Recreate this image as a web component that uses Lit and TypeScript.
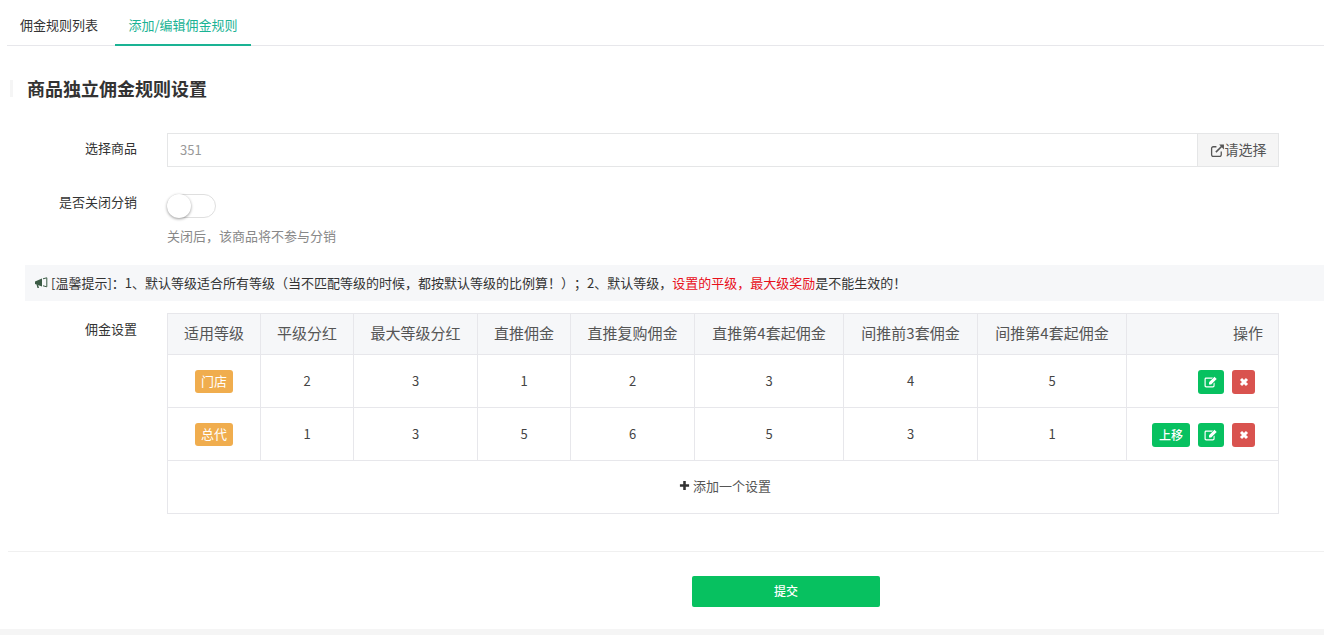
import { LitElement, html, css, svg } from "lit";
import { customElement } from "lit/decorators.js";

const editIcon = svg`<svg class="ico" viewBox="0 0 14 12" width="14" height="12"><path d="M2 1.500h7l-1.200 1.200H2.400a.7.7 0 0 0-.7.7v6.200c0 .4.3.7.7.7h6.400c.4 0 .7-.3.7-.7V7.600l1.100-1.100v3.300c0 1-.8 1.700-1.700 1.700H2.200c-1 0-1.700-.8-1.700-1.700V3.200c0-1 .7-1.700 1.500-1.700z" fill="#fff"/><path d="M5 6.200 10.500 .8l2.200 2.200-5.500 5.500H5z" fill="#fff"/></svg>`;
const xIcon = svg`<svg class="ico" viewBox="0 0 10 10" width="10" height="10"><path d="M2 2 8 8M8 2 2 8" stroke="#fff" stroke-width="3"/></svg>`;

const rows = [
  { name: "门店", v: [2, 3, 1, 2, 3, 4, 5], up: false },
  { name: "总代", v: [1, 3, 5, 6, 5, 3, 1], up: true },
];
const heads = ["适用等级", "平级分红", "最大等级分红", "直推佣金", "直推复购佣金", "直推第4套起佣金", "间推前3套佣金", "间推第4套起佣金"];
const widths = [93, 93, 124, 93, 124, 149, 134, 149, 152];

@customElement("app-root")
export class AppRoot extends LitElement {
  static styles = css`
    :host { display: block; height: 635px; overflow: hidden; background: #f5f5f5; font-family: "Microsoft YaHei", "Noto Sans CJK SC", "Noto Sans", sans-serif; font-size: 13px; color: #333; text-spacing-trim: space-all; }
    .card { background: #fff; height: 629px; box-sizing: border-box; }
    .tabs { display: flex; height: 46px; margin-left: 7px; border-bottom: 1px solid #e7e7eb; box-sizing: border-box; }
    .tab { padding: 3px 13px 0; height: 46px; box-sizing: border-box; color: #333; line-height: 44px; }
    .tab.active { margin-left: 4px; width: 136px; text-align: center; padding: 3px 0 0; color: #1ab394; border-bottom: 2px solid #1ab394; }
    .title { margin: 34px 0 0 10px; height: 17px; border-left: 3px solid #f5f5f5; padding-left: 14px; font-size: 18px; font-weight: 700; line-height: 16px; color: #333; }
    .row { display: flex; }
    .label { width: 137px; text-align: right; flex: none; line-height: 20px; }
    .body { margin-left: 30px; }
    .pick { margin-top: 36px; }
    .pick .label { padding-top: 5px; }
    .input { width: 1030px; height: 34px; box-sizing: border-box; border: 1px solid #e5e6e7; border-right: none; padding-left: 12px; line-height: 32px; color: #999; }
    .addon { width: 82px; height: 34px; box-sizing: border-box; border: 1px solid #e5e6e7; background: #f5f5f5; display: flex; align-items: center; justify-content: center; color: #555; line-height: 30px; font-size: 14px; }
    .addon span { margin-top: -2px; }
    .switch-row { margin-top: 27px; }
    .switch-row .label { margin-top: -2px; }
    .switch { width: 49px; height: 24px; box-sizing: border-box; border: 1px solid #dfdfdf; border-radius: 12px; position: relative; background: #fff; }
    .knob { position: absolute; left: -1px; top: -1px; width: 24px; height: 24px; border-radius: 50%; background: #fff; box-shadow: 0 1px 3px rgba(0,0,0,.4); }
    .hint { color: #888; margin-top: 8px; line-height: 20px; }
    .notice { margin: 19px 0 0 25px; height: 36px; background: #f6f7f9; display: flex; align-items: center; padding-left: 9px; gap: 3px; line-height: 20px; }
    .notice svg { flex: none; }
    .red { color: #e8101a; }
    .fee { margin-top: 12px; }
    .fee .label { padding-top: 6px; }
    table { width: 1111px; border-collapse: collapse; table-layout: fixed; font-size: 13px; }
    th, td { border: 1px solid #e7e7eb; text-align: center; padding: 0; color: #444; }
    th { height: 41px; background: #f6f7f9; font-size: 15px; font-weight: 400; color: #555; padding-bottom: 3px; box-sizing: border-box; }
    td { height: 53px; font-size: 13px; box-sizing: border-box; }
    td.num { padding-bottom: 2px; }
    th.ops { text-align: right; padding-right: 15px; }
    td.ops { text-align: right; padding: 1px 23px 0 0; }
    .ops-in { display: flex; justify-content: flex-end; align-items: center; gap: 8px; }
    .tag { display: inline-block; width: 38px; height: 23px; line-height: 21px; border-radius: 3px; background: #f0ad4e; color: #fff; font-size: 13px; vertical-align: middle; }
    .btn { height: 24px; border-radius: 3px; background: #07c160; color: #fff; display: inline-flex; align-items: center; justify-content: center; width: 26px; font-size: 12px; font-weight: 500; }
    .btn.up { width: 38px; }
    .btn.del { background: #d9534f; width: 23px; }
    .ico { display: block; }
    td.add { color: #555; padding-bottom: 3px; }
    .add-in { display: flex; justify-content: center; align-items: center; gap: 3px; padding-left: 4px; }
    .foot { margin: 37px 0 0 8px; border-top: 1px solid #f0f0f0; display: flex; justify-content: center; padding: 24px 0 0 240px; }
    .submit { width: 188px; height: 31px; border-radius: 2px; background: #07c160; color: #fff; text-align: center; line-height: 30px; font-size: 12px; font-weight: 500; }
  `;

  render() {
    return html`<div class="card">
      <div class="tabs">
        <div class="tab">佣金规则列表</div>
        <div class="tab active">添加/编辑佣金规则</div>
      </div>
      <div class="title">商品独立佣金规则设置</div>
      <div class="row pick">
        <div class="label">选择商品</div>
        <div class="body row">
          <div class="input">351</div>
          <div class="addon">
            <svg viewBox="0 0 14 14" width="15" height="15"><path d="M10.500 8v3a1.500 1.500 0 0 1-1.500 1.500H3A1.500 1.500 0 0 1 1.500 11V5A1.500 1.500 0 0 1 3 3.500h3" fill="none" stroke="#555" stroke-width="1.200"/><path d="M5.500 8.500 11 3" fill="none" stroke="#555" stroke-width="1.500"/><path d="M8.500 1.500H13V6z" fill="#555"/></svg>
            <span>请选择</span>
          </div>
        </div>
      </div>
      <div class="row switch-row">
        <div class="label">是否关闭分销</div>
        <div class="body">
          <div class="switch"><div class="knob"></div></div>
          <div class="hint">关闭后，该商品将不参与分销</div>
        </div>
      </div>
      <div class="notice">
        <svg viewBox="0 0 14 12" width="14" height="12"><path d="M1 4.500 8 1.500v8L1 7z" fill="#3b5b45"/><path d="M2.500 7.500 3.500 11h1.500L4 7.500z" fill="#3b5b45"/><path d="M9 1.800 12.800 .8v9L9 8.800" fill="none" stroke="#3b5b45"/></svg>
        <span>[温馨提示]：1、默认等级适合所有等级（当不匹配等级的时候，都按默认等级的比例算！）；2、默认等级，<span class="red">设置的平级，最大级奖励</span>是不能生效的！</span>
      </div>
      <div class="row fee">
        <div class="label">佣金设置</div>
        <div class="body">
          <table>
            <colgroup>${widths.map((w) => html`<col style="width:${w}px" />`)}</colgroup>
            <thead><tr>${heads.map((h) => html`<th>${h}</th>`)}<th class="ops">操作</th></tr></thead>
            <tbody>
              ${rows.map((r) => html`<tr>
                <td><span class="tag">${r.name}</span></td>
                ${r.v.map((n) => html`<td class="num">${n}</td>`)}
                <td class="ops"><div class="ops-in">
                  ${r.up ? html`<span class="btn up">上移</span>` : ""}
                  <span class="btn">${editIcon}</span>
                  <span class="btn del">${xIcon}</span>
                </div></td>
              </tr>`)}
              <tr><td class="add" colspan="9"><div class="add-in">
                <svg viewBox="0 0 12 12" width="11" height="11"><path d="M6 1v10M1 6h10" stroke="#333" stroke-width="2.800"/></svg>
                <span>添加一个设置</span>
              </div></td></tr>
            </tbody>
          </table>
        </div>
      </div>
      <div class="foot"><div class="submit">提交</div></div>
    </div>`;
  }
}
